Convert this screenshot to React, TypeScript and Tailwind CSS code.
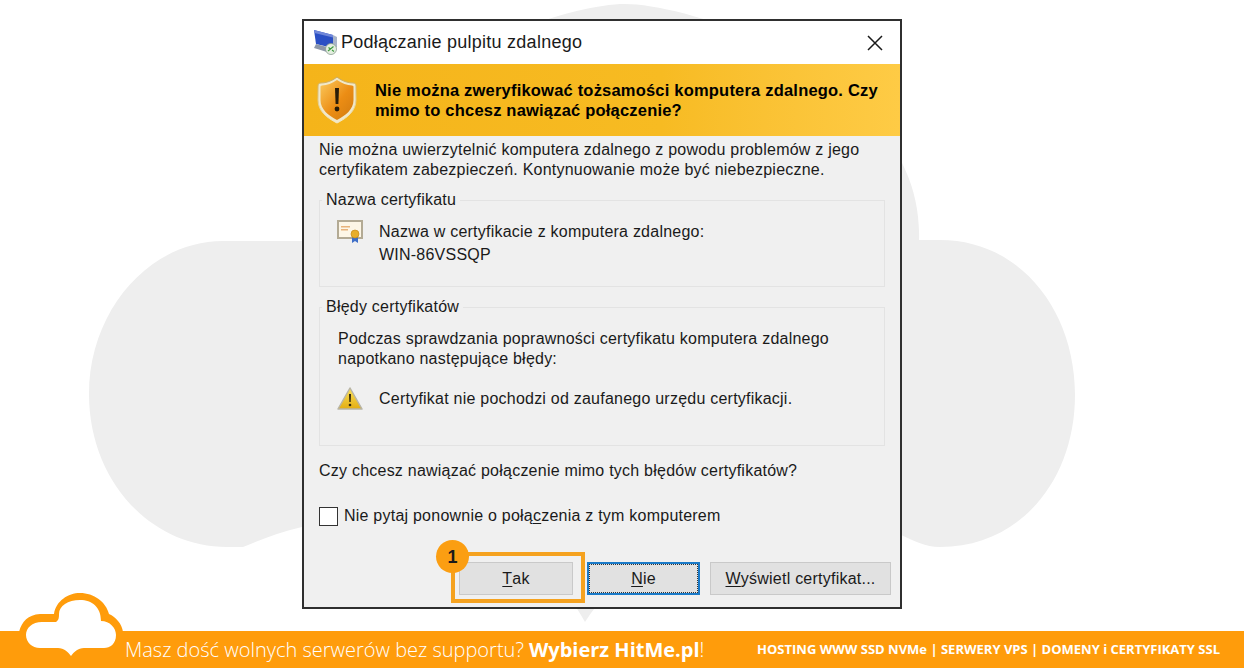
const dialogFont = { fontFamily: '"Liberation Sans", Arial, sans-serif' };

function CloudBackdrop() {
  return (
    <svg className="absolute left-0 top-0" width="1244" height="668" viewBox="0 0 1244 668">
      <path
        d="M223 241 L322 241 C340 80 555 4 625 4 C695 4 925 80 919 240 L940 240 C1020 240 1075 310 1075 395 C1075 480 1020 547 940 547 C925 547 915 541 901 535 L700 548 C660 552 615 575 585 622 C560 575 520 548 470 530 L302 527 C280 532 260 540 243 547 L227 547 C150 547 89 480 89 394 C89 310 150 241 223 241 Z"
        fill="#eeeeee"
      />
    </svg>
  );
}

function RdpIcon() {
  return (
    <svg width="26" height="26" viewBox="0 0 26 26">
      <path d="M0 0 L19 5 L19 18 L2 14 Z" fill="#2a4fc4" />
      <path d="M0 0 L19 5 L19 7.5 L0.5 3 Z" fill="#6f86d8" />
      <path d="M19 5 L23 7 L23 17 L19 18 Z" fill="#a9b4c8" />
      <path d="M2 14 L13 17 L13 22 L0 18 Z" fill="#8d97a8" />
      <circle cx="17" cy="19" r="5.5" fill="#e4efe0" stroke="#8a9a90" strokeWidth="0.8" />
      <path d="M14 21 L19.5 16.5 M14.5 17.5 L16.5 19 M18 20 L20 21.5" stroke="#3f9b3f" strokeWidth="1.2" fill="none" />
    </svg>
  );
}

function ShieldIcon() {
  return (
    <svg width="40" height="48" viewBox="0 0 40 48">
      <defs>
        <linearGradient id="shieldFill" x1="0" y1="0" x2="1" y2="1">
          <stop offset="0" stopColor="#fbc95c" />
          <stop offset="0.55" stopColor="#ec8d14" />
          <stop offset="1" stopColor="#d07a10" />
        </linearGradient>
        <linearGradient id="shieldRim" x1="0" y1="0" x2="0" y2="1">
          <stop offset="0" stopColor="#c9a85a" />
          <stop offset="1" stopColor="#f3e9c4" />
        </linearGradient>
      </defs>
      <path
        d="M20 1 C25 5 31 7 36 7 C38 7 39 8 39 10 L39 24 C39 35 30 42 20 47 C10 42 1 35 1 24 L1 10 C1 8 2 7 4 7 C9 7 15 5 20 1 Z"
        fill="#f1e8c8"
        stroke="url(#shieldRim)"
        strokeWidth="1"
      />
      <path
        d="M20 4 C25 7.5 30 9.3 35 9.6 C36 9.7 36.5 10.2 36.5 11 L36.5 24 C36.5 33.5 28.5 39.5 20 44 C11.5 39.5 3.5 33.5 3.5 24 L3.5 11 C3.5 10.2 4 9.7 5 9.6 C10 9.3 15 7.5 20 4 Z"
        fill="url(#shieldFill)"
      />
      <path d="M18 12 L22 12 L21.4 28 L18.6 28 Z" fill="#2a1c08" />
      <circle cx="20" cy="33" r="2.4" fill="#2a1c08" />
    </svg>
  );
}

function CertIcon() {
  return (
    <svg width="26" height="24" viewBox="0 0 26 24">
      <rect x="1" y="1" width="24" height="17" fill="#fdf6e6" stroke="#b3aa94" strokeWidth="2" />
      <rect x="4" y="6" width="9" height="1.5" fill="#e8b27a" />
      <rect x="4" y="9" width="7" height="1.5" fill="#e8b27a" />
      <path d="M15 17 L15 23 L18 21 L21 23 L21 17 Z" fill="#3f6fc8" />
      <circle cx="18" cy="14" r="4" fill="#e8ae2c" stroke="#c88a1a" strokeWidth="0.7" />
    </svg>
  );
}

function WarnIcon() {
  return (
    <svg width="26" height="23" viewBox="0 0 26 23">
      <defs>
        <linearGradient id="warnFill" x1="0" y1="0" x2="0" y2="1">
          <stop offset="0" stopColor="#fbe25a" />
          <stop offset="1" stopColor="#e3ad13" />
        </linearGradient>
      </defs>
      <path d="M13 1 L25 22 L1 22 Z" fill="url(#warnFill)" stroke="#b8b5a6" strokeWidth="1.5" strokeLinejoin="round" />
      <path d="M12 7 L14 7 L13.7 15 L12.3 15 Z" fill="#33290c" />
      <circle cx="13" cy="18" r="1.3" fill="#33290c" />
    </svg>
  );
}

function CloudLogo() {
  return (
    <svg className="absolute left-[18px] top-[592px]" width="106" height="72" viewBox="0 0 106 72">
      <path
        d="M1 40 C4 29 10 23 22 22 L36 22 C38 9 50 1 62 1 C76 1 88 10 91 22 C98 25 104 32 105 40 Z"
        fill="#ff9c0b"
      />
      <path
        d="M8 43 C8 36 14 30 24 30 L38 30 C41 28 41 25 41 22 C41 14 50 8 62 8 C74 8 83 15 83 29 C92 29 98 36 98 43 C98 52 92 56 86 56 L66 56 C60 56 56 60 53 64 C50 60 46 56 40 56 L22 56 C14 56 8 50 8 43 Z"
        fill="#ffffff"
      />
    </svg>
  );
}

function GroupBox({ title, className, children }: { title: string; className: string; children: React.ReactNode }) {
  return (
    <div className={`relative border border-[#e3e3e3] ${className}`}>
      <span className="absolute left-[2px] top-[-10px] bg-[#f0f0f0] px-1 leading-[18px] text-[#1a1a1a]">{title}</span>
      {children}
    </div>
  );
}

function DialogButton({ hotkey, rest, className }: { hotkey: string; rest: string; className: string }) {
  return (
    <button className={`flex h-[33px] items-center justify-center bg-[#e1e1e1] text-[16px] text-[#1a1a1a] ${className}`}>
      <span className="underline underline-offset-2">{hotkey}</span>
      {rest}
    </button>
  );
}

export default function App() {
  return (
    <div className="relative flex h-[668px] w-[1244px] flex-col overflow-hidden bg-white">
      <CloudBackdrop />

      <main className="relative flex flex-1 justify-center pt-[19px]">
        <div
          style={dialogFont}
          className="ml-[-40px] flex h-[590px] w-[600px] flex-col border-2 border-[#2f2f2f] bg-[#f0f0f0]"
        >
          {/* Title bar */}
          <div className="flex h-[43px] items-center bg-white pl-[10px] pr-[16px]">
            <RdpIcon />
            <span className="ml-[1px] text-[18px] tracking-[0.25px] text-[#1a1a1a]">Podłączanie pulpitu zdalnego</span>
            <svg className="ml-auto" width="18" height="18" viewBox="0 0 18 18">
              <path d="M2 2 L16 16 M16 2 L2 16" stroke="#1a1a1a" strokeWidth="1.5" />
            </svg>
          </div>

          {/* Warning banner */}
          <div className="flex h-[72px] items-center bg-gradient-to-r from-[#f5b41a] via-[#f7bb22] via-60% to-[#fecb45] pl-[13px]">
            <ShieldIcon />
            <p className="ml-[18px] text-[16.5px] font-bold leading-[20px] tracking-[0.2px] text-black">
              Nie można zweryfikować tożsamości komputera zdalnego. Czy
              <br />
              mimo to chcesz nawiązać połączenie?
            </p>
          </div>

          {/* Body */}
          <div className="flex flex-1 flex-col px-[15px] pt-[4px] text-[16px] leading-[20px] tracking-[0.23px] text-[#1a1a1a]">
            <p>
              Nie można uwierzytelnić komputera zdalnego z powodu problemów z jego
              <br />
              certyfikatem zabezpieczeń. Kontynuowanie może być niebezpieczne.
            </p>

            <GroupBox title="Nazwa certyfikatu" className="mt-[20px] h-[87px] w-[566px]">
              <div className="flex pl-[17px] pt-[19px]">
                <CertIcon />
                <p className="ml-[16px] leading-[23px]">
                  Nazwa w certyfikacie z komputera zdalnego:
                  <br />
                  WIN-86VSSQP
                </p>
              </div>
            </GroupBox>

            <GroupBox title="Błędy certyfikatów" className="mt-[20px] h-[139px] w-[566px]">
              <p className="pl-[18px] pt-[21px] leading-[20px]">
                Podczas sprawdzania poprawności certyfikatu komputera zdalnego
                <br />
                napotkano następujące błędy:
              </p>
              <div className="mt-[18px] flex items-center pl-[17px]">
                <WarnIcon />
                <span className="ml-[16px]">Certyfikat nie pochodzi od zaufanego urzędu certyfikacji.</span>
              </div>
            </GroupBox>

            <p className="mt-[15px]">Czy chcesz nawiązać połączenie mimo tych błędów certyfikatów?</p>

            <label className="mt-[25px] flex items-center">
              <span className="h-[19px] w-[19px] border border-[#333333] bg-white" />
              <span className="ml-[6px]">
                Nie pytaj ponownie o połą<span className="underline underline-offset-2">c</span>zenia z tym komputerem
              </span>
            </label>

            <div className="mt-[36px] mr-[-6px] flex justify-end">
              <div className="relative">
                <DialogButton hotkey="T" rest="ak" className="w-[114px] border border-[#c9c9c9]" />
                <div className="absolute left-[-8px] top-[-10px] h-[51px] w-[134px] border-4 border-[#f5a21f]" />
                <div className="absolute left-[-23px] top-[-22px] flex h-[33px] w-[33px] items-center justify-center rounded-full bg-[#fb9e12] text-[18px] font-bold text-[#1a1a1a]">
                  1
                </div>
              </div>
              <DialogButton
                hotkey="N"
                rest="ie"
                className="ml-[14px] w-[113px] border-2 border-[#1a7ac8] outline-1 outline-dotted -outline-offset-3 outline-[#333333]"
              />
              <DialogButton hotkey="W" rest="yświetl certyfikat..." className="ml-[10px] w-[181px] border border-[#c9c9c9]" />
            </div>
          </div>
        </div>
      </main>

      <footer
        style={{ fontFamily: '"Open Sans", sans-serif' }}
        className="relative flex h-[37px] items-center bg-[#ff9c0b] pl-[125px] pr-[24px] text-white"
      >
        <p className="text-[20px] font-light">
          Masz dość wolnych serwerów bez supportu? <span className="font-bold">Wybierz HitMe.pl</span>!
        </p>
        <p className="ml-auto text-[13px] font-bold">HOSTING WWW SSD NVMe | SERWERY VPS | DOMENY i CERTYFIKATY SSL</p>
      </footer>

      <CloudLogo />
    </div>
  );
}
